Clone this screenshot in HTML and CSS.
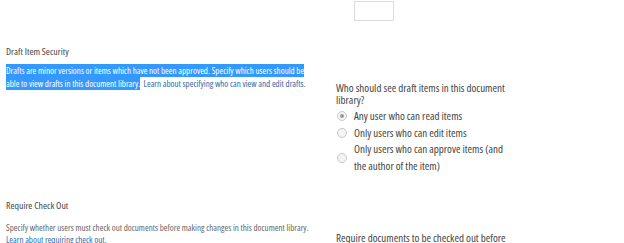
FILE: index.html
```html
<!DOCTYPE html>
<html lang="en">
    <head>
        <meta charset="UTF-8">
        <meta name="viewport" content="width=device-width, initial-scale=1.0">
        <title>Versioning Settings</title>
        <link rel="stylesheet" href="styles.css">
    </head>
    <body>
        <!-- tail of the previous section -->
        <div class="section section-top">
            <div class="label-col"></div>
            <div class="field-col">
                <div class="text-box"></div>
            </div>
        </div>

        <!-- Draft Item Security -->
        <div class="section section-drafts">
            <div class="label-col">
                <h3 class="section-title">Draft Item Security</h3>
                <p class="section-desc"><span class="selected">Drafts are minor versions or items which have not been approved. Specify which users should be able to view drafts in this document library.</span> &nbsp;<a class="learn-link" href="#">Learn about specifying who can view and edit drafts.</a></p>
            </div>
            <div class="field-col">
                <p class="question">Who should see draft items in this document library?</p>
                <ul class="radio-list">
                    <li class="radio-item"><span class="radio checked"></span><span class="radio-label">Any user who can read items</span></li>
                    <li class="radio-item"><span class="radio"></span><span class="radio-label">Only users who can edit items</span></li>
                    <li class="radio-item"><span class="radio"></span><span class="radio-label">Only users who can approve items (and the author of the item)</span></li>
                </ul>
            </div>
        </div>

        <!-- Require Check Out -->
        <div class="section section-checkout">
            <div class="label-col">
                <h3 class="section-title">Require Check Out</h3>
                <p class="section-desc">Specify whether users must check out documents before making changes in this document library.<br><a class="learn-link" href="#">Learn about requiring check out.</a></p>
            </div>
            <div class="field-col">
                <p class="question">Require documents to be checked out before</p>
            </div>
        </div>
    </body>
</html>
```

FILE: styles.css
```css
body {
    margin: 0;
    padding-left: 6px;
    background-color: #fff;
    font-family: "Open Sans", "Liberation Sans", Arial, sans-serif;
    font-stretch: 75%;
    color: #444;
    overflow: hidden;
}

.section {
    display: flex;
}

.label-col {
    width: 330px;
    flex-shrink: 0;
}

.field-col {
    flex-grow: 1;
}

/* previous section input */
.section-top .field-col {
    padding-top: 1px;
}

.text-box {
    margin-left: 18px;
    width: 38px;
    height: 18px;
    border: 1px solid #dcdcdc;
}

.section-drafts {
    margin-top: 24px;
}

.section-checkout {
    margin-top: 25px;
}

.section-title {
    margin: 0;
    font-size: 9.8px;
    font-weight: normal;
    line-height: 14px;
    color: #444;
}

.section-desc {
    margin: 6px 0 0;
    font-size: 9px;
    line-height: 12.5px;
    color: #666;
    width: 304px;
}

.section-checkout .section-desc {
    margin-top: 9px;
    line-height: 12px;
}

.selected {
    background-color: #3399ff;
    color: #fff;
}

.learn-link {
    color: #2f6aa8;
    text-decoration: none;
}

.question {
    margin: 0;
    font-size: 11px;
    line-height: 12px;
    width: 176px;
}

.section-drafts .field-col {
    padding-top: 37px;
}

.section-checkout .field-col {
    padding-top: 33px;
}

.radio-list {
    list-style: none;
    margin: 2px 0 0;
    padding: 0;
}

.radio-item {
    display: flex;
    align-items: center;
    font-size: 11px;
    line-height: 16.5px;
}

.radio {
    width: 8px;
    height: 8px;
    margin: 0 7px 0 1px;
    border: 1px solid #c9c9c9;
    border-radius: 50%;
    background-color: #f4f4f4;
    flex-shrink: 0;
    position: relative;
}

.radio.checked::after {
    content: "";
    position: absolute;
    left: 2px;
    top: 2px;
    width: 4px;
    height: 4px;
    border-radius: 50%;
    background-color: #9a9a9a;
}

.radio-label {
    width: 152px;
}
```
